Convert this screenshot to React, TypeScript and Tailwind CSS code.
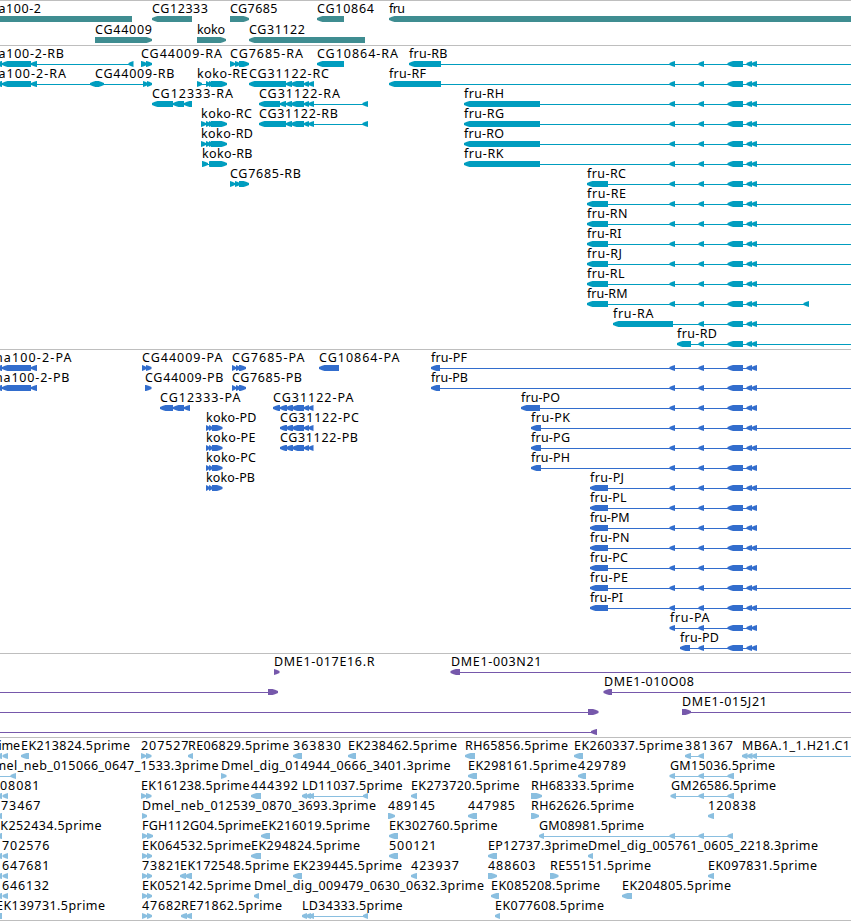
type Label = [text: string, start: number, end: number];
type Shape = ["L" | "R" | "-", number, number];
type Lane = { labels: Label[]; shapes: Shape[] };

const L = (a: number, b: number): Shape => ["L", a, b];
const R = (a: number, b: number): Shape => ["R", a, b];
const line = (a: number, b: number): Shape => ["-", a, b];
const lane = (labels: Label[], ...shapes: Shape[]): Lane => ({ labels, shapes });

const EDGE = 860;

// Exons shared by the fru transcripts, with the intron running from `from` to `to`.
const fruTail = (from: number, to: number): Shape[] => [
  line(from, to),
  ...(from < 670 ? [L(669.5, 675)] : []),
  L(698.5, 704),
  L(727.5, 743),
  L(746.5, 752),
  L(751.5, 757),
];
const fru = (start: number, end: number, to = EDGE): Shape[] => [L(start, end), ...fruTail(end, to)];

const a100 = [L(-4, 2), L(2, 31), L(31, 37)];
const cg7685R = [R(230, 235), R(235, 240), R(239, 249)];
const cg7685P = [R(232, 236), R(236, 240), R(239, 246)];
const cg31122Tail = [L(286, 292), L(291, 304), L(304, 309), L(308.5, 314)];
const cg31122P = [L(280, 287), L(286, 293), L(292, 304), L(304, 309), L(308.5, 313.5), line(280, 313)];
const kokoR = [R(201, 206), R(206, 210), R(209, 213), R(211, 227)];
const kokoP = [R(206, 209.5), R(209, 212.5), R(212, 222.5)];
const pairLeft = [L(-4, 2), L(2.5, 8)];
const pairRight = [R(142, 147), R(147, 152)];
const ldRead = [L(302, 307), L(306, 311), L(309, 314), line(314, 364), L(363, 368)];

const genes: Lane[] = [
  lane(
    [["a100-2", -1.5, 41], ["CG12333", 152, 208], ["CG7685", 230, 277.5], ["CG10864", 317, 374], ["fru", 389, 405]],
    L(-10, 132), L(152, 192), R(230, 249), L(317, 344), L(389, EDGE),
  ),
  lane(
    [["CG44009", 95, 152], ["koko", 197, 225], ["CG31122", 249, 305]],
    R(95, 152), R(197, 226), L(249, 365),
  ),
];

const transcripts: Lane[] = [
  lane(
    [["a100-2-RB", -1.5, 64], ["CG44009-RA", 141, 222], ["CG7685-RA", 230, 303], ["CG10864-RA", 317, 398], ["fru-RB", 409, 447.5]],
    ...a100, line(37, 130), L(128.5, 133.5), R(141, 147), R(146, 152), ...cg7685R, L(317, 344), ...fru(409, 441),
  ),
  lane(
    [["a100-2-RA", -1.5, 66], ["CG44009-RB", 95, 174.5], ["koko-RE", 197, 247.5], ["CG31122-RC", 249, 329], ["fru-RF", 389, 426]],
    ...a100, line(37, 144), L(90, 99), R(95, 104), R(143, 148), R(147, 152),
    R(197, 202), line(202, 206), R(206, 210), R(209, 213), R(211, 227), L(249, 286), ...cg31122Tail, ...fru(389, 441),
  ),
  lane(
    [["CG12333-RA", 152, 233], ["CG31122-RA", 259, 340], ["fru-RH", 464, 504]],
    L(152, 173), L(173, 184), L(184, 192), L(259, 280), L(280, 286), ...cg31122Tail, line(314, 364), L(362.5, 368), ...fru(464, 540),
  ),
  lane(
    [["koko-RC", 201, 252], ["CG31122-RB", 259, 338], ["fru-RG", 464, 504]],
    ...kokoR, L(259, 286), ...cg31122Tail, line(314, 364), L(362.5, 368), ...fru(464, 540),
  ),
  lane([["koko-RD", 201, 253], ["fru-RO", 464, 504]], ...kokoR, ...fru(464, 540)),
  lane([["koko-RB", 202, 252.5], ["fru-RK", 464, 503.5]], R(202, 208), R(209, 213), R(210, 227), line(206, 212), ...fru(464, 540)),
  lane([["CG7685-RB", 230, 301], ["fru-RC", 587, 626]], ...cg7685R, ...fru(587, 608)),
  lane([["fru-RE", 587, 626]], ...fru(587, 608)),
  lane([["fru-RN", 587, 627.5]], ...fru(587, 608)),
  lane([["fru-RI", 587, 621.5]], ...fru(587, 608)),
  lane([["fru-RJ", 587, 622]], ...fru(587, 608)),
  lane([["fru-RL", 587, 624.5]], ...fru(587, 608)),
  lane([["fru-RM", 587, 627.5]], ...fru(587, 608, 805), L(803.5, 809)),
  lane([["fru-RA", 613, 653.5]], ...fru(613, 673)),
  lane([["fru-RD", 677, 717]], ...fru(677, 691)),
];

const proteins: Lane[] = [
  lane(
    [["na100-2-PA", -5, 71.5], ["CG44009-PA", 142, 222.5], ["CG7685-PA", 232, 304.5], ["CG10864-PA", 319, 399.5], ["fru-PF", 431, 467]],
    ...a100, R(142, 146.5), R(146, 151.5), ...cg7685P, L(319, 339), ...fru(431, 440, 757),
  ),
  lane(
    [["na100-2-PB", -5, 69.5], ["CG44009-PB", 145, 223.5], ["CG7685-PB", 232, 302], ["fru-PB", 431, 468]],
    ...a100, R(145, 151.5), ...cg7685P, ...fru(431, 440),
  ),
  lane(
    [["CG12333-PA", 160, 240.5], ["CG31122-PA", 273, 353.5], ["fru-PO", 521, 560]],
    L(160, 173), L(173, 184), L(184, 190), L(273, 280), ...cg31122P, ...fru(521, 540, 757),
  ),
  lane([["koko-PD", 206, 256.5], ["CG31122-PC", 280, 359], ["fru-PK", 531, 570]], ...kokoP, ...cg31122P, ...fru(531, 541)),
  lane([["koko-PE", 206, 255.5], ["CG31122-PB", 280, 358], ["fru-PG", 531, 570]], ...kokoP, ...cg31122P, ...fru(531, 541)),
  lane([["koko-PC", 206, 256], ["fru-PH", 531, 570]], ...kokoP, ...fru(531, 541, 757)),
  lane([["koko-PB", 206, 255], ["fru-PJ", 590, 624]], ...kokoP, ...fru(590, 608)),
  lane([["fru-PL", 590, 626.5]], ...fru(590, 608, 757)),
  lane([["fru-PM", 590, 629.5]], ...fru(590, 608, 757)),
  lane([["fru-PN", 590, 629.5]], ...fru(590, 608)),
  lane([["fru-PC", 590, 628]], ...fru(590, 608, 757)),
  lane([["fru-PE", 590, 628]], ...fru(590, 608)),
  lane([["fru-PI", 590, 623]], ...fru(590, 608)),
  lane([["fru-PA", 670, 709.5]], L(669.5, 675), ...fruTail(675, 757)),
  lane([["fru-PD", 680, 719]], ...fru(680, 690, 757)),
];

const clones: Lane[] = [
  lane([["DME1-017E16.R", 274, 374.5], ["DME1-003N21", 451, 541.5]], R(274, 279.5), L(450.5, 460), line(460, EDGE)),
  lane([["DME1-010O08", 604, 694]], line(0, 268), R(268, 278), L(603.5, 612), line(612, EDGE)),
  lane([["DME1-015J21", 682, 767]], line(0, 588), R(588, 598.5), R(682, 691), line(690, EDGE)),
  lane([], line(0, 593), L(591, 597)),
];

const ests: Lane[] = [
  lane(
    [["prime", -14, 20], ["EK213824.5prime", 21, 130], ["207527", 141, 188.5], ["RE06829.5prime", 188, 289], ["363830", 293, 341], ["EK238462.5prime", 348, 457], ["RH65856.5prime", 465, 568], ["EK260337.5prime", 574, 683], ["381367", 685, 733], ["MB6A.1_1.H21.C1", 742, 850]],
    ...pairLeft, L(21, 29), R(141, 146), R(146, 151.5), L(188, 193), L(293, 302), L(348, 356), L(465, 475), L(574, 583),
    L(685, 691), line(690, 700), L(698.5, 704), L(742, 747.5), L(747, 752.5), L(752, 757), line(757, EDGE),
  ),
  lane(
    [["Dmel_neb_015066_0647_1533.3prime", -15, 218.5], ["Dmel_dig_014944_0666_3401.3prime", 221, 450.5], ["EK298161.5prime", 468, 577], ["429789", 578, 626], ["GM15036.5prime", 670, 775]],
    line(0, 12), L(10.5, 16), R(221, 226.5), L(468, 477), L(578, 586), line(674, 730), L(669.5, 675), L(698.5, 704), L(727.5, 734),
  ),
  lane(
    [["08081", 0, 39.5], ["EK161238.5prime", 141, 249.5], ["444392", 251, 298], ["LD11037.5prime", 302, 402.5], ["EK273720.5prime", 411, 519.5], ["RH68333.5prime", 531, 634], ["GM26586.5prime", 671, 776]],
    ...pairLeft, R(141, 146), R(146, 151.5), L(251, 261), ...ldRead, L(411, 417), R(531, 542), line(674, 730), L(670.5, 676), L(698.5, 704), L(727.5, 734),
  ),
  lane(
    [["73467", 1, 40.5], ["Dmel_neb_012539_0870_3693.3prime", 142, 376], ["489145", 388, 435], ["447985", 468, 515], ["RH62626.5prime", 531, 634], ["120838", 708, 756]],
    L(-4, 2), R(142, 147), R(388, 395), L(468, 477), R(531, 539), L(708, 714),
  ),
  lane(
    [["EK252434.5prime", -7, 101.5], ["FGH112G04.5prime", 142, 261], ["EK216019.5prime", 261, 370], ["EK302760.5prime", 389, 497.5], ["GM08981.5prime", 539, 644]],
    L(-4, 2), R(142, 147), R(147, 153), L(261, 270), L(389, 398), L(539, 544), line(544, 730), L(669.5, 675), L(698.5, 704), L(727.5, 733),
  ),
  lane(
    [["702576", 2, 49.5], ["EK064532.5prime", 142, 251], ["EK294824.5prime", 251, 360], ["500121", 389, 436.5], ["EP12737.3prime", 488, 588], ["Dmel_dig_005761_0605_2218.3prime", 588, 818]],
    ...pairLeft, ...pairRight, L(251, 261), L(389, 398), L(488, 497), L(588, 593),
  ),
  lane(
    [["647681", 2, 49.5], ["73821", 142, 181], ["EK172548.5prime", 180, 289], ["EK239445.5prime", 293, 402], ["423937", 411, 459], ["488603", 488, 535.5], ["RE55151.5prime", 550, 651], ["EK097831.5prime", 708, 817]],
    ...pairLeft, ...pairRight, L(180, 186), L(185, 192), L(293, 302), L(411, 417), R(488, 497), R(550, 558.5), L(708, 714),
  ),
  lane(
    [["646132", 2, 49], ["EK052142.5prime", 142, 251], ["Dmel_dig_009479_0630_0632.3prime", 254, 484], ["EK085208.5prime", 491, 600], ["EK204805.5prime", 622, 731]],
    ...pairLeft, ...pairRight, L(254, 259), L(491, 499), L(622, 632),
  ),
  lane(
    [["EK139731.5prime", -4, 105], ["47682", 142, 181], ["RE71862.5prime", 181, 282], ["LD34333.5prime", 302, 402.5], ["EK077608.5prime", 495, 604]],
    L(-8, 2), ...pairRight, L(181, 187), L(186, 192), ...ldRead, L(495, 500),
  ),
];

function Glyph({ shape }: { shape: Shape }) {
  const [kind, a, b] = shape;
  if (kind === "-") return <rect x={a} y={17} width={b - a} height={1} />;
  const tip = Math.min(5.5, b - a);
  const mid = tip * 0.55;
  const points =
    kind === "L"
      ? `${a},16 ${a + mid},14.7 ${a + tip},14 ${b},14 ${b},20 ${a + tip},20 ${a + mid},19.3 ${a},18`
      : `${b},16 ${b - mid},14.7 ${b - tip},14 ${a},14 ${a},20 ${b - tip},20 ${b - mid},19.3 ${b},18`;
  return <polygon points={points} />;
}

function Track({ lanes, color, laneHeight = "h-5", className = "pt-px pb-0.5" }: { lanes: Lane[]; color: string; laneHeight?: string; className?: string }) {
  return (
    <section className={`flex flex-col border-t border-[#bebebe] ${className}`}>
      {lanes.map((l, i) => (
        <div key={i} className={`w-full ${laneHeight}`}>
          <svg className={`block h-full w-full overflow-visible ${color}`}>
            <g className="fill-current">
              {l.shapes.map((s, j) => (
                <Glyph key={j} shape={s} />
              ))}
            </g>
            <g className="fill-black font-['Noto_Sans','DejaVu_Sans',sans-serif] text-[12.5px]">
              {l.labels.map(([text, start, end]) => (
                <text key={text} x={start} y={11} textLength={end - start} lengthAdjust="spacing">
                  {text}
                </text>
              ))}
            </g>
          </svg>
        </div>
      ))}
    </section>
  );
}

export default function App() {
  return (
    <main className="flex h-[921px] w-[851px] flex-col overflow-hidden bg-white">
      <Track lanes={genes} color="text-[#3f8d91]" laneHeight="h-[21px]" className="pt-px pb-px" />
      <Track lanes={transcripts} color="text-[#009dbf]" />
      <Track lanes={proteins} color="text-[#326dcd]" />
      <Track lanes={clones} color="text-[#7658ab]" />
      <Track lanes={ests} color="text-[#8abfe0]" className="border-b pt-px pb-px" />
    </main>
  );
}
